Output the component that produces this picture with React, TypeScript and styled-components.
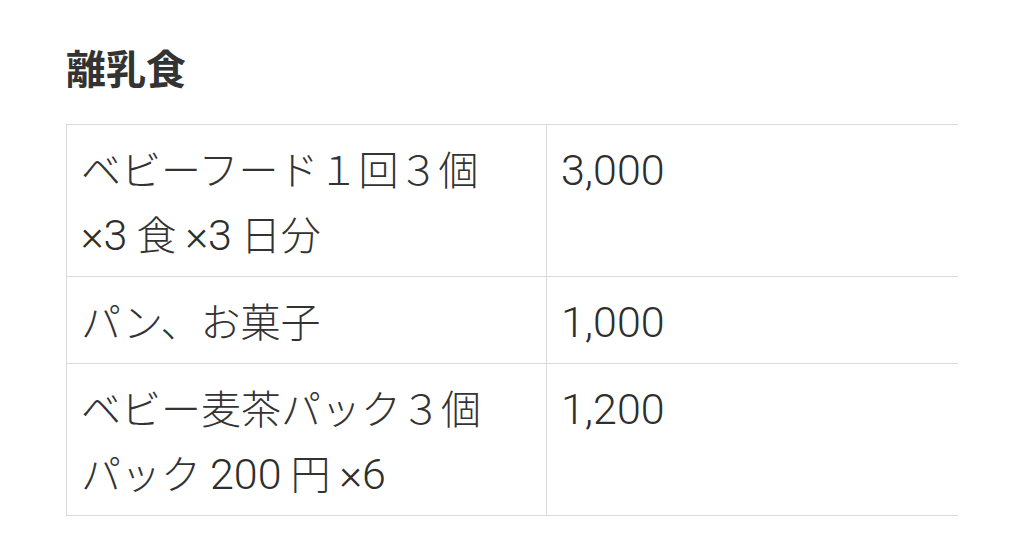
import React from 'react';
import styled, { createGlobalStyle } from 'styled-components';

const GlobalStyle = createGlobalStyle`
  html, body {
    margin: 0;
    padding: 0;
    background: #fff;
  }
  body {
    font-family: "Noto Sans CJK JP", "Liberation Sans", sans-serif;
    color: #333;
  }
`;

const Section = styled.section`
  padding: 43px 0 0 66px;
  width: 892px;
`;

const Heading = styled.h3`
  margin: 0 0 33px;
  font-size: 40px;
  line-height: 48px;
  font-weight: 700;
  color: #333;
`;

const Table = styled.table`
  width: 892px;
  border-collapse: collapse;
  table-layout: fixed;
`;

const Cell = styled.td<{ $w?: number }>`
  width: ${(p) => (p.$w ? `${p.$w}px` : 'auto')};
  padding: 11px 14px 10px;
  border: 1px solid #d9d9d9;
  border-right: none;
  vertical-align: top;
  font-size: 40px;
  font-weight: 300;
  line-height: 65px;
  color: #333;
`;

// digits, commas and × in a Helvetica-like face, spaced off from kana/kanji
const Latin = styled.span<{ $before: boolean; $after: boolean }>`
  font-family: Roboto, "Liberation Sans", sans-serif;
  font-size: 43px;
  font-weight: 300;
  line-height: 1;
  color: #2e2e2e;
  margin-left: ${(p) => (p.$before ? '9px' : '0')};
  margin-right: ${(p) => (p.$after ? '9px' : '0')};
`;

const LATIN = /^[0-9,×]+$/;

const Text = ({ value }: { value: string }) => {
  const parts = value.split(/([0-9,×]+)/);
  return (
    <>
      {parts.map((part, i) =>
        LATIN.test(part) ? (
          <Latin key={i} $before={!!parts[i - 1]} $after={!!parts[i + 1]}>
            {part}
          </Latin>
        ) : (
          part
        )
      )}
    </>
  );
};

const rows = [
  { item: ['ベビーフード１回３個', '×3食×3日分'], price: '3,000' },
  { item: ['パン、お菓子'], price: '1,000' },
  { item: ['ベビー麦茶パック３個', 'パック200円×6'], price: '1,200' },
];

const App = () => {
  return (
    <>
      <GlobalStyle />
      <Section>
        <Heading>離乳食</Heading>
        <Table>
          <tbody>
            {rows.map((r) => (
              <tr key={r.price}>
                <Cell $w={451}>
                  {r.item.map((line, i) => (
                    <React.Fragment key={line}>
                      {i > 0 && <br />}
                      <Text value={line} />
                    </React.Fragment>
                  ))}
                </Cell>
                <Cell>
                  <Text value={r.price} />
                </Cell>
              </tr>
            ))}
          </tbody>
        </Table>
      </Section>
    </>
  );
};

export default App;
